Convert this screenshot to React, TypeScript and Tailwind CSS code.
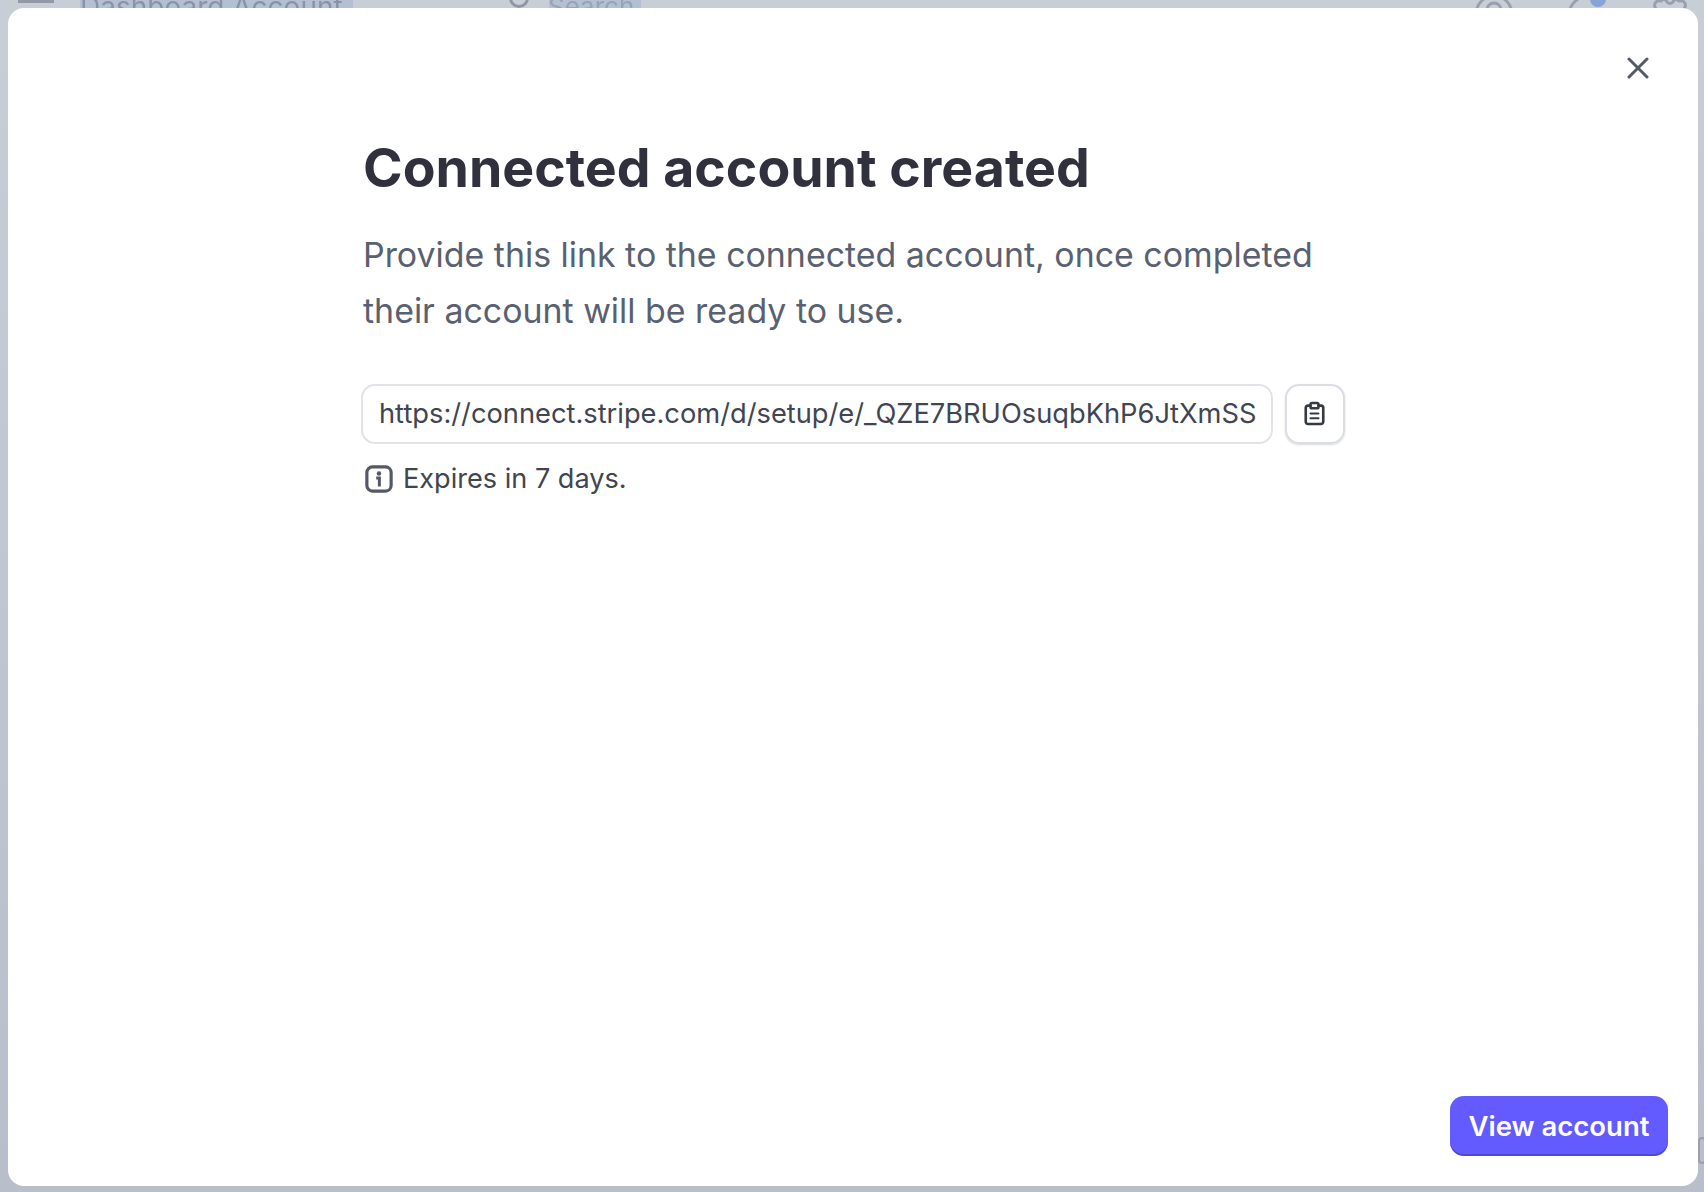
import React from "react";

function App() {
  return (
    <div className="relative h-[1192px] w-[1704px] overflow-hidden bg-gradient-to-b from-[#c8ced6] to-[#b8bfca] font-['Inter',sans-serif]">
      {/* dimmed page behind the dialog */}
      <div className="flex h-[8px] items-start overflow-hidden">
        <div className="ml-[18px] h-[3px] w-[36px] bg-[#9299a6] blur-[0.5px]" />
        <div className="ml-[26px] h-[8px] w-[273px] overflow-hidden whitespace-nowrap bg-[#b3c0d4] text-[28px] text-[#8a93a3]">
          <div className="mt-[-3px] h-[11px] leading-[40px] translate-y-[-10px] blur-[0.6px]">Dashboard Account</div>
        </div>
        <div className="ml-[156px] mt-[-12px] h-[20px] w-[20px] rounded-full border-[3px] border-[#8f97a5] blur-[0.5px]" />
        <div className="ml-[20px] h-[8px] w-[92px] overflow-hidden whitespace-nowrap bg-[#b3c0d4] text-[26px] text-[#98a3b7]">
          <div className="mt-[-3px] h-[11px] leading-[40px] translate-y-[-10px] -translate-x-[1px] blur-[0.6px]">Search</div>
        </div>
      </div>
      <svg className="absolute left-[1470px] top-0 blur-[0.4px]" width="240" height="9" viewBox="0 0 240 9" fill="none" stroke="#99a0ad" strokeWidth="3">
        <circle cx="24" cy="14" r="18" />
        <circle cx="24" cy="10" r="7" />
        <path d="M100 9 C101 5 104 2 108 -1" />
        <circle cx="128" cy="-1" r="8" fill="#87a3d8" stroke="none" />
        <path d="M186 9 C183 5 185 0 191 1 C193 -1 196 -1 197 2 C199 4 201 4 203 2 C204 -1 207 -1 209 1 C215 0 217 5 214 9" />
      </svg>
      <div className="absolute left-[1698px] top-[1137px] h-[27px] w-[8px] rounded-sm border-[2px] border-[#99a0ad]" />

      {/* dialog */}
      <div className="absolute left-[8px] top-[8px] flex h-[1178px] w-[1690px] flex-col rounded-[16px] bg-white">
        <div className="flex justify-end pr-[49px] pt-[49px]">
          <svg width="22" height="22" viewBox="0 0 22 22" fill="none" stroke="#545969" strokeWidth="3" strokeLinecap="round">
            <path d="M2 2 L20 20 M20 2 L2 20" />
          </svg>
        </div>
        <div className="flex flex-1 flex-col pl-[353px]">
          <h1 className="ml-[2px] mt-[55px] whitespace-nowrap text-[53.6px] font-bold leading-[68px] text-[#30313d]">
            Connected account created
          </h1>
          <p className="ml-[2px] mt-[25px] w-[980px] text-[33.9px] leading-[56px] text-[#596171]">
            Provide this link to the connected account, once completed their account will be ready to use.
          </p>
          <div className="mt-[45px] flex items-center gap-[12px]">
            <div className="flex h-[60px] w-[912px] items-center whitespace-nowrap rounded-[14px] border-2 border-[#e0e3e8] px-[16px] pt-[1px] text-[27.27px] text-[#414552]">
              https://connect.stripe.com/d/setup/e/_QZE7BRUOsuqbKhP6JtXmSS
            </div>
            <button className="flex h-[60px] w-[60px] items-center justify-center rounded-[14px] border-2 border-[#dadde3] shadow-[0_1px_2px_rgba(64,68,82,0.2)]">
              <svg width="21" height="25" viewBox="0 0 24 28" fill="none" stroke="#353a44" strokeWidth="3" strokeLinecap="round" strokeLinejoin="round" className="-mt-[1px] -ml-[1px]">
                <path d="M7 5 H4.5 A2.5 2.5 0 0 0 2 7.5 V23.5 A2.5 2.5 0 0 0 4.5 26 H19.5 A2.5 2.5 0 0 0 22 23.5 V7.5 A2.5 2.5 0 0 0 19.5 5 H17" />
                <rect x="7.5" y="2" width="9" height="6" rx="1.5" />
                <path d="M7.5 14 H16.5 M7.5 19.5 H16.5" strokeWidth="2.4" />
              </svg>
            </button>
          </div>
          <div className="mt-[16px] flex items-center gap-[10px] text-[27.1px] leading-[38px] text-[#414552]">
            <svg width="28" height="28" viewBox="0 0 30 30" fill="none" className="ml-[4px]">
              <rect x="2" y="2" width="26" height="26" rx="6" stroke="#545969" strokeWidth="3.4" />
              <circle cx="15" cy="9" r="2.4" fill="#545969" />
              <path d="M12 14 H15.4 V23" stroke="#545969" strokeWidth="3.2" />
            </svg>
            <span>Expires in 7 days.</span>
          </div>
        </div>
        <div className="flex justify-end pb-[30px] pr-[30px]">
          <button className="h-[60px] w-[218px] rounded-[14px] bg-[#635bff] pt-[1px] text-[27.5px] font-semibold text-white shadow-[inset_0_-2px_0_rgba(40,40,130,0.35)]">
            View account
          </button>
        </div>
      </div>
    </div>
  );
}

export default App;
